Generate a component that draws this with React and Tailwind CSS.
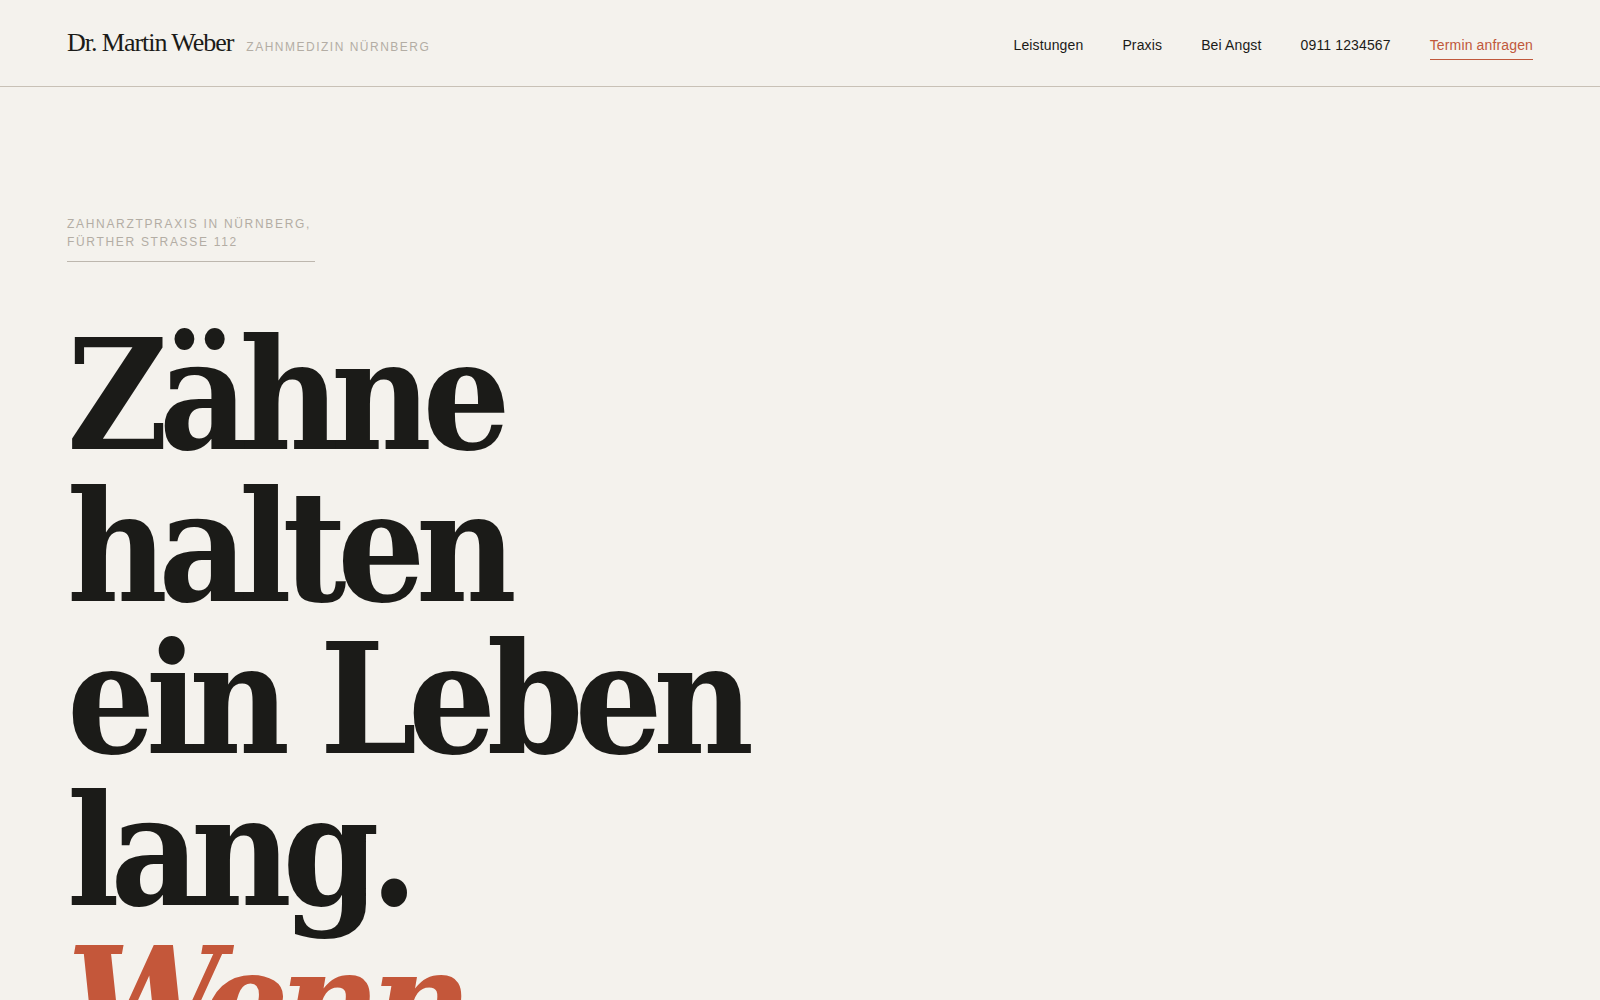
export default function App() {
  const nav = ['Leistungen', 'Praxis', 'Bei Angst', '0911 1234567']

  return (
    <div className="min-h-screen bg-[#f4f2ed] text-[#1b1b18] overflow-hidden" style={{ height: 1000 }}>
      {/* HEADER */}
      <header className="h-[87px] border-b border-[#c8c1b6] px-[67px] flex items-center justify-between">
        <div className="flex items-baseline gap-[13px] -mt-[2px]">
          <span className="font-['Liberation_Serif',serif] text-[26px] tracking-[-0.04em] text-[#1b1b18]">
            Dr. Martin Weber
          </span>
          <span className="font-['Liberation_Sans',Arial,sans-serif] text-[12px] tracking-[0.125em] uppercase text-[#b3ada4]">
            Zahnmedizin Nürnberg
          </span>
        </div>

        <nav className="flex items-center gap-[39px] font-['Liberation_Sans',Arial,sans-serif] text-[14px] tracking-[0.01em] pt-[5px]">
          {nav.map(n => (
            <a key={n} className="text-[#1b1b18]">{n}</a>
          ))}
          <a className="text-[#c0583b] border-b border-[#c0583b] pb-[3px] -mb-[4px]">Termin anfragen</a>
        </nav>
      </header>

      {/* HERO */}
      <section className="px-[67px] pt-[128px]">
        <div className="w-[248px] border-b border-[#bdb7ae] pb-[10px] font-['Liberation_Sans',Arial,sans-serif] text-[12px] leading-[18px] tracking-[0.14em] uppercase text-[#b3ada4]">
          Zahnarztpraxis in Nürnberg, Fürther Strasse 112
        </div>

        <h1 className="mt-[57px] font-['DejaVu_Serif_Condensed','DejaVu_Serif',serif] font-stretch-condensed font-bold text-[154px] leading-[152px] tracking-[-0.06em] text-[#1b1b18]">
          Zähne<br />
          halten<br />
          ein Leben<br />
          lang.<br />
          <em className="text-[#c4573a]">Wenn</em>
        </h1>
      </section>
    </div>
  )
}
